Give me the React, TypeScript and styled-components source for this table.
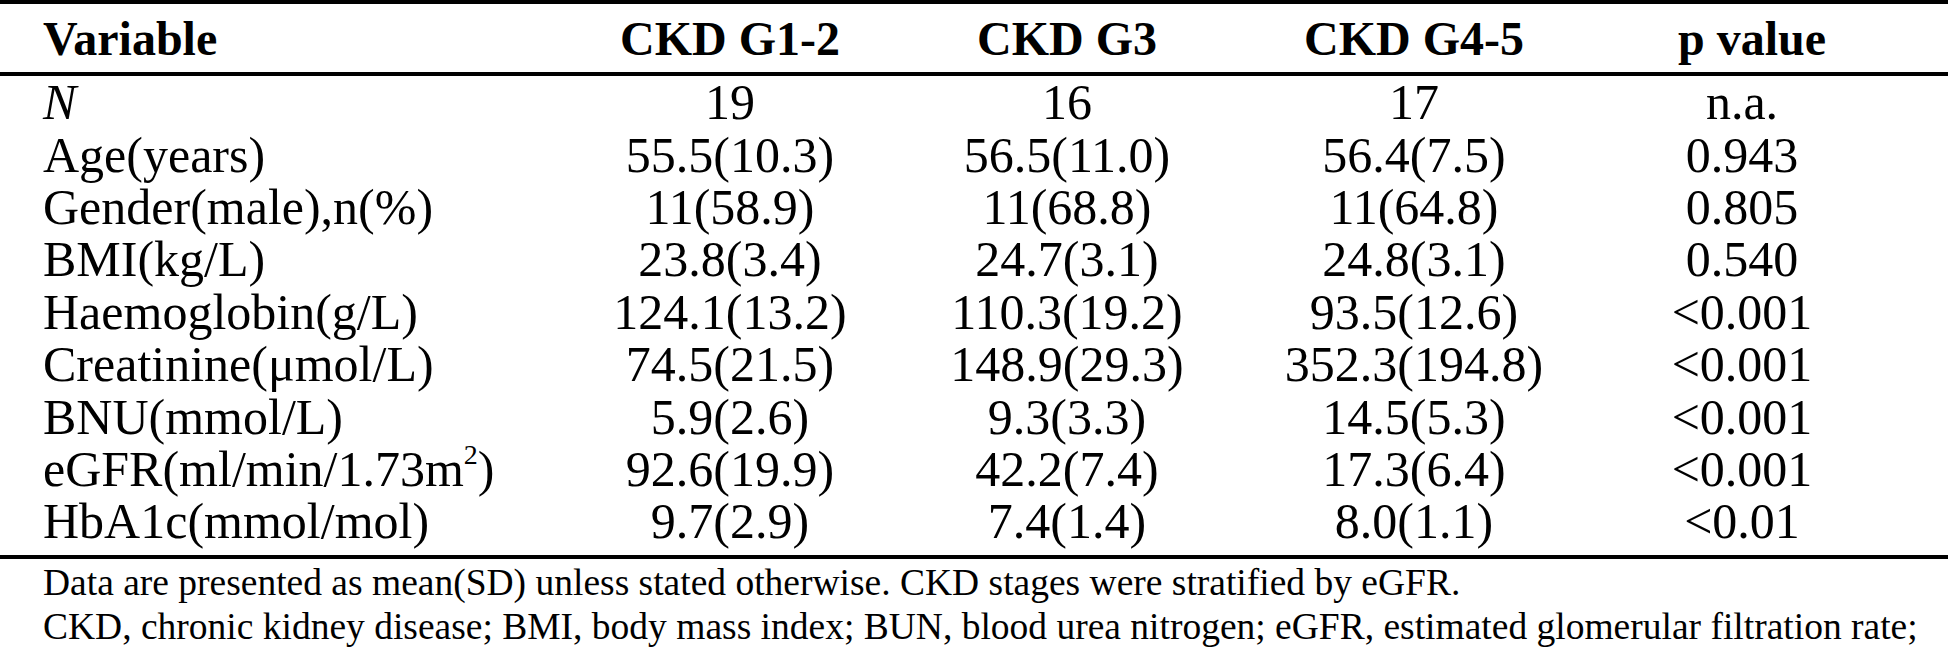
import React from 'react';
import styled, { createGlobalStyle } from 'styled-components';

const GlobalStyle = createGlobalStyle`
  html, body {
    margin: 0;
    padding: 0;
    background: #fff;
    overflow: hidden;
  }
  body {
    font-family: "Liberation Serif", "Times New Roman", serif;
    color: #000;
  }
`;

const Wrapper = styled.div`
  width: 1948px;
  height: 650px;
  background: #fff;
`;

const Table = styled.div`
  display: flex;
  flex-direction: column;
`;

// indent | variable | G1-2 | G3 | G4-5 | p value | rest
const cols = '43px 520px 334px 340px 354px 302px 1fr';

const HeadRow = styled.div`
  display: grid;
  grid-template-columns: ${cols};
  height: 66px;
  align-items: center;
  border-top: 4px solid #000;
  border-bottom: 4px solid #000;
  font-size: 48px;
  font-weight: bold;
  line-height: 1;
  padding-top: 2px;
  box-sizing: content-box;
`;

const Body = styled.div`
  padding-bottom: 7px;
  border-bottom: 4px solid #000;
`;

const Row = styled.div`
  display: grid;
  grid-template-columns: ${cols};
  height: 52.4px;
  align-items: center;
  font-size: 50px;
  line-height: 52px;
`;

const Cell = styled.div<{ $align?: 'left' | 'center'; $italic?: boolean; $shift?: number }>`
  text-align: ${(p) => p.$align || 'center'};
  font-style: ${(p) => (p.$italic ? 'italic' : 'normal')};
  padding-left: ${(p) => p.$shift || 0}px;
  white-space: nowrap;
`;

const Sup = styled.sup`
  font-size: 28px;
  line-height: 0;
  vertical-align: 22px;
`;

const Foot = styled.div`
  padding: 2px 0 0 43px;
  font-size: 37.5px;
  line-height: 44px;
  white-space: nowrap;
`;

const rows: { label: React.ReactNode; italic?: boolean; v: string[]; p: string }[] = [
  { label: 'N', italic: true, v: ['19', '16', '17'], p: 'n.a.' },
  { label: 'Age(years)', v: ['55.5(10.3)', '56.5(11.0)', '56.4(7.5)'], p: '0.943' },
  { label: 'Gender(male),n(%)', v: ['11(58.9)', '11(68.8)', '11(64.8)'], p: '0.805' },
  { label: 'BMI(kg/L)', v: ['23.8(3.4)', '24.7(3.1)', '24.8(3.1)'], p: '0.540' },
  { label: 'Haemoglobin(g/L)', v: ['124.1(13.2)', '110.3(19.2)', '93.5(12.6)'], p: '<0.001' },
  { label: 'Creatinine(μmol/L)', v: ['74.5(21.5)', '148.9(29.3)', '352.3(194.8)'], p: '<0.001' },
  { label: 'BNU(mmol/L)', v: ['5.9(2.6)', '9.3(3.3)', '14.5(5.3)'], p: '<0.001' },
  {
    label: (
      <>
        eGFR(ml/min/1.73m<Sup>2</Sup>)
      </>
    ),
    v: ['92.6(19.9)', '42.2(7.4)', '17.3(6.4)'],
    p: '<0.001',
  },
  { label: 'HbA1c(mmol/mol)', v: ['9.7(2.9)', '7.4(1.4)', '8.0(1.1)'], p: '<0.01' },
];

const App: React.FC = () => {
  return (
    <Wrapper>
      <GlobalStyle />
      <Table>
        <HeadRow>
          <span />
          <Cell $align="left">Variable</Cell>
          <Cell>CKD G1-2</Cell>
          <Cell>CKD G3</Cell>
          <Cell>CKD G4-5</Cell>
          <Cell $shift={20}>p value</Cell>
        </HeadRow>
        <Body>
          {rows.map((r, i) => (
            <Row key={i}>
              <span />
              <Cell $align="left" $italic={r.italic}>
                {r.label}
              </Cell>
              {r.v.map((x, j) => (
                <Cell key={j}>{x}</Cell>
              ))}
              <Cell>{r.p}</Cell>
            </Row>
          ))}
        </Body>
        <Foot>
          <div>Data are presented as mean(SD) unless stated otherwise. CKD stages were stratified by eGFR.</div>
          <div>
            CKD, chronic kidney disease; BMI, body mass index; BUN, blood urea nitrogen; eGFR, estimated glomerular
            filtration rate;
          </div>
        </Foot>
      </Table>
    </Wrapper>
  );
};

export default App;
